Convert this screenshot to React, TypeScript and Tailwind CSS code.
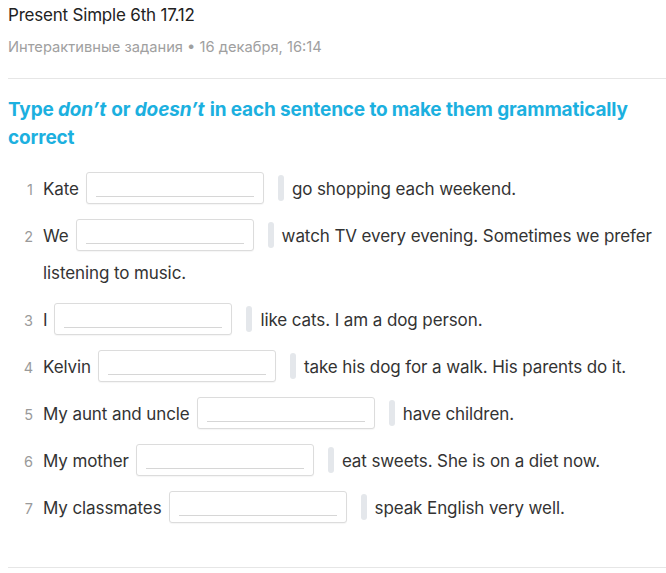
import React from "react";

const rows: { n: number; pre: string; post: string }[] = [
  { n: 1, pre: "Kate", post: "go shopping each weekend." },
  { n: 2, pre: "We", post: "watch TV every evening. Sometimes we prefer listening to music." },
  { n: 3, pre: "I", post: "like cats. I am a dog person." },
  { n: 4, pre: "Kelvin", post: "take his dog for a walk. His parents do it." },
  { n: 5, pre: "My aunt and uncle", post: "have children." },
  { n: 6, pre: "My mother", post: "eat sweets. She is on a diet now." },
  { n: 7, pre: "My classmates", post: "speak English very well." },
];

function Blank() {
  return (
    <span className="inline-block align-middle ml-[7px] w-[178px] h-[32px] border border-[#dcdcdc] rounded-[3px] bg-white relative -mt-[4px] shadow-[0_1px_1px_rgba(0,0,0,0.04)]">
      <span className="absolute left-[9px] right-[9px] top-[23px] h-px bg-[#d6d6d6]" />
    </span>
  );
}

export default function App() {
  return (
    <div
      className="bg-white w-[666px] h-[573px] overflow-hidden text-[#333]"
      style={{ fontFamily: "Inter, 'Noto Sans', sans-serif" }}
    >
      <div className="pl-2">
        <div className="pt-[5px] text-[17px] leading-[20px] text-[#222] tracking-[-0.2px]">Present Simple 6th 17.12</div>
        <div className="mt-[12px] text-[14.7px] leading-[20px] text-[#a0a0a0]">Интерактивные задания • 16 декабря, 16:14</div>
        <div className="mt-[21px] border-t border-[#e6e6e6]" />
        <div className="mt-[17px] text-[19px] leading-[28px] font-bold text-[#1cb0df] tracking-[-0.15px] pr-8">
          Type <i className="pr-[1px]">don’t</i> or <i className="pr-[1px]">doesn’t</i> in each sentence to make them grammatically correct
        </div>
        <div className="mt-[19px]">
          {rows.map((r) => (
            <div key={r.n} className="flex mb-[10px]">
              <div className="w-[25px] shrink-0 text-right text-[14.5px] leading-[37px] text-[#9a9a9a]">{r.n}</div>
              <div className="ml-[10px] text-[17px] leading-[37px] text-[#333] tracking-[-0.1px]">
                {r.pre}
                <Blank />
                <span className="inline-block align-middle ml-[14px] w-[6px] h-[26px] rounded-[3px] bg-[#e4e7eb] -mt-[4px]" />
                <span className="ml-[8px]">{r.post}</span>
              </div>
            </div>
          ))}
        </div>
        <div className="mt-[40px] border-t border-[#e6e6e6]" />
      </div>
    </div>
  );
}
